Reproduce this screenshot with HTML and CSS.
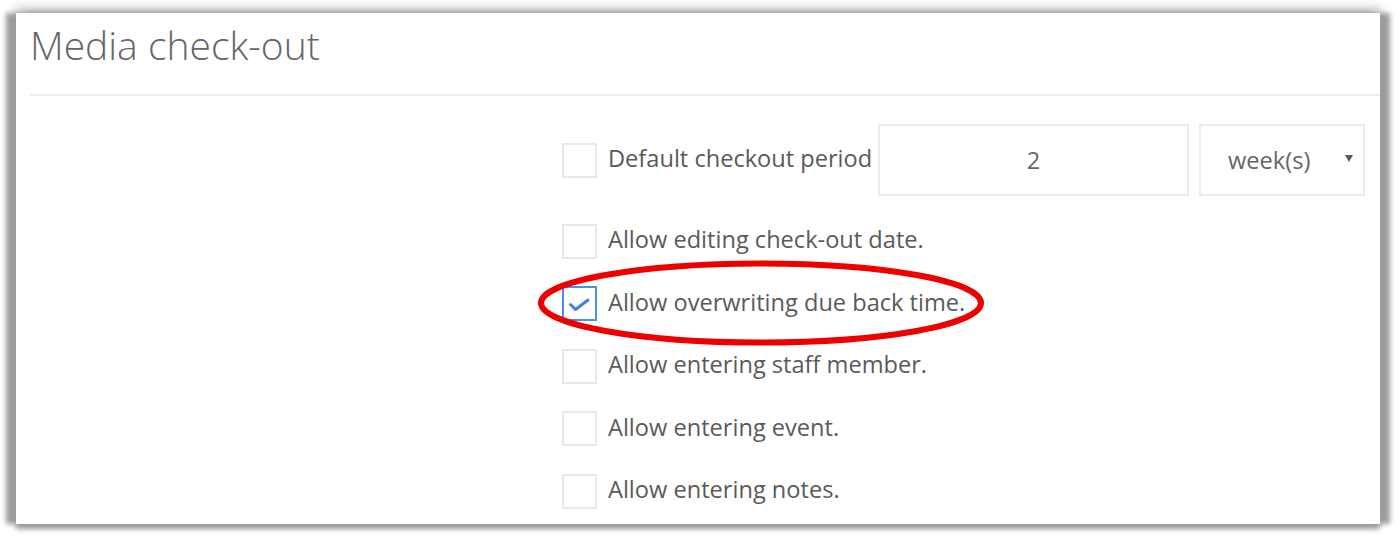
FILE: index.html
```html
<!DOCTYPE html>
<html>
<head>
<meta charset="utf-8">
<link rel="stylesheet" href="styles.css">
</head>
<body>
<div class="panel">
  <div class="header">
    <h1 class="title">Media check-out</h1>
  </div>
  <div class="form">
    <div class="row row-first">
      <span class="box"></span>
      <span class="label">Default checkout period</span>
      <div class="controls">
        <div class="input">2</div>
        <div class="select"><span>week(s)</span><span class="caret"></span></div>
      </div>
    </div>
    <div class="row">
      <span class="box"></span>
      <span class="label">Allow editing check-out date.</span>
    </div>
    <div class="row row-marked">
      <span class="box checked">
        <svg class="check" viewBox="0 0 36 36" width="36" height="36"><path d="M8.5 18.5 L13.5 23.5 L26 14" fill="none" stroke="#3f7fe6" stroke-width="3" stroke-linecap="round" stroke-linejoin="round"/></svg>
      </span>
      <span class="label">Allow overwriting due back time.</span>
      <svg class="ring" viewBox="0 0 452 90" width="452" height="90"><ellipse cx="226" cy="45" rx="220" ry="39.5" fill="none" stroke="#ee0000" stroke-width="6"/></svg>
    </div>
    <div class="row">
      <span class="box"></span>
      <span class="label">Allow entering staff member.</span>
    </div>
    <div class="row">
      <span class="box"></span>
      <span class="label">Allow entering event.</span>
    </div>
    <div class="row">
      <span class="box"></span>
      <span class="label">Allow entering notes.</span>
    </div>
  </div>
</div>
</body>
</html>
```
FILE: styles.css
```css
html, body {
  margin: 0;
  padding: 0;
  background: #ffffff;
}
body {
  width: 1399px;
  height: 538px;
  overflow: hidden;
  font-family: "Open Sans", "Noto Sans", sans-serif;
  color: #555555;
}
.panel {
  margin: 13px 0 0 16px;
  width: 1364px;
  height: 511px;
  background: #ffffff;
  overflow: hidden;
  box-shadow:
    -10px 0 5px 0 #9c9c9c,
    10px 0 5px 0 #9c9c9c,
    0 5px 5px 0 #9c9c9c,
    0 -5px 9px 1px #cccccc;
  position: relative;
}
.header {
  margin-left: 14px;
  height: 81px;
  border-bottom: 2px solid #eeeeee;
}
.title {
  margin: 0;
  padding: 0;
  font-weight: 300;
  font-size: 39px;
  line-height: 64px;
  color: #666666;
}
.form {
  padding: 28px 15px 0 546px;
}
.row {
  display: flex;
  align-items: center;
  height: 35px;
  margin-top: 27.6px;
  position: relative;
}
.row-first {
  height: 72px;
  margin-top: 0;
}
.box {
  width: 35px;
  height: 35px;
  box-sizing: border-box;
  border: 2px solid #e8e8e8;
  flex: none;
  position: relative;
}
.box.checked {
  border-color: #4a90e2;
}
.check {
  position: absolute;
  left: -2px;
  top: -2px;
}
.label {
  margin-left: 11px;
  font-size: 23.6px;
  line-height: 32px;
  margin-top: -4px;
  color: #5a5a5a;
  white-space: nowrap;
}
.controls {
  margin-left: auto;
  display: flex;
  gap: 10px;
}
.input {
  width: 311px;
  height: 72px;
  box-sizing: border-box;
  border: 2px solid #ebebeb;
  display: flex;
  align-items: center;
  justify-content: center;
  font-size: 23.6px;
  color: #666666;
}
.select {
  width: 166px;
  height: 72px;
  box-sizing: border-box;
  border: 2px solid #ebebeb;
  display: flex;
  align-items: center;
  padding-left: 27px;
  padding-right: 10px;
  font-size: 23.6px;
  color: #666666;
}
.caret {
  margin-left: auto;
  width: 0;
  height: 0;
  border-left: 4.5px solid transparent;
  border-right: 4.5px solid transparent;
  border-top: 7px solid #5a5a5a;
  margin-top: -4px;
}
.ring {
  position: absolute;
  left: -27px;
  top: -28px;
  pointer-events: none;
}
```
